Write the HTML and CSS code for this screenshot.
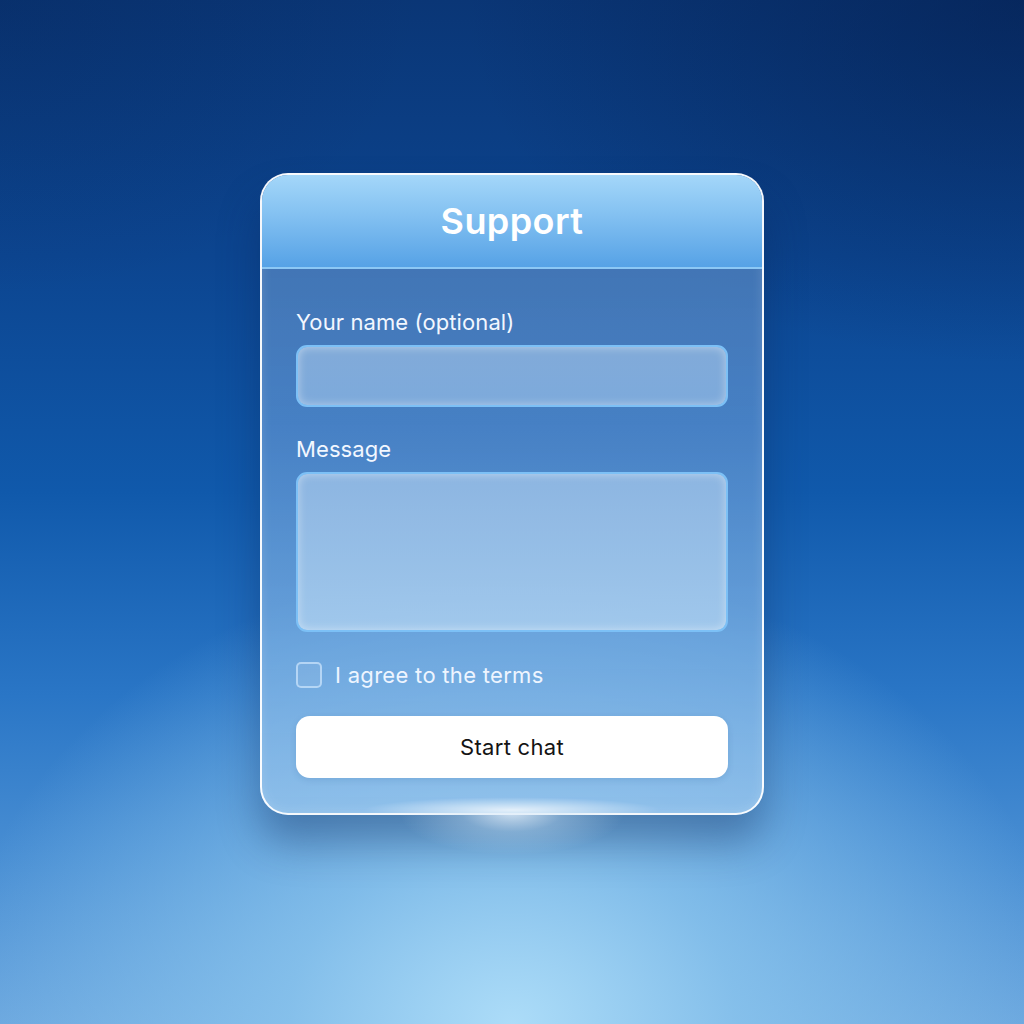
FILE: index.html
```html
<!DOCTYPE html>
<html>
<head>
<meta charset="utf-8">
<link rel="stylesheet" href="styles.css">
</head>
<body>
<div class="stage">
  <div class="card-wrap">
    <div class="card">
      <div class="card-head">
        <h1 class="title">Support</h1>
      </div>
      <div class="card-body">
        <label class="label">Your name (optional)</label>
        <div class="field field-input"></div>
        <label class="label label-gap">Message</label>
        <div class="field field-area"></div>
        <div class="check-row">
          <span class="checkbox"></span>
          <span class="check-text">I agree to the terms</span>
        </div>
        <button class="btn">Start chat</button>
      </div>
      <div class="inner-glow"></div>
    </div>
    <div class="under-glow"></div>
  </div>
</div>
</body>
</html>
```

FILE: styles.css
```css
html, body {
  margin: 0;
  padding: 0;
  width: 1024px;
  height: 1024px;
  overflow: hidden;
}
body {
  font-family: Inter, "Noto Sans", "Liberation Sans", sans-serif;
}
.stage {
  width: 1024px;
  height: 1024px;
  display: flex;
  justify-content: center;
  align-items: flex-start;
  background:
    radial-gradient(ellipse 560px 460px at 50% 100%, rgba(172,220,248,1) 0%, rgba(140,198,238,0.8) 40%, rgba(100,165,225,0) 100%),
    linear-gradient(180deg, #0a3676 0%, #0c4590 25%, #1059ab 48%, #2a76c6 68%, #4b90d4 85%, #6aa6de 100%);
  position: relative;
}
.stage::before {
  content: "";
  position: absolute;
  inset: 0;
  background: radial-gradient(ellipse 800px 520px at 100% 0%, rgba(3,25,70,0.5) 0%, rgba(3,25,70,0) 70%),
              radial-gradient(ellipse 600px 420px at 0% 0%, rgba(3,25,70,0.2) 0%, rgba(3,25,70,0) 70%);
  pointer-events: none;
}
.card-wrap {
  position: relative;
  margin-top: 173px;
  z-index: 1;
}
.card {
  position: relative;
  width: 504px;
  height: 642px;
  box-sizing: border-box;
  border: 2px solid rgba(255,255,255,0.95);
  border-radius: 28px;
  overflow: hidden;
  background: linear-gradient(180deg, rgba(70,118,178,0.9) 0%, rgba(85,140,205,0.8) 40%, rgba(125,178,228,0.78) 75%, rgba(150,196,236,0.8) 100%);
  box-shadow: 0 28px 40px rgba(10,40,90,0.38), inset 0 0 12px rgba(255,255,255,0.15);
  display: flex;
  flex-direction: column;
}
.card-head {
  height: 92px;
  flex: none;
  background: linear-gradient(180deg, #a4d7f9 0%, #82c0f1 45%, #56a2e6 100%);
  border-bottom: 2px solid #8cc8f5;
  display: flex;
  align-items: center;
  justify-content: center;
}
.title {
  margin: 0;
  color: #ffffff;
  font-size: 36px;
  font-weight: 600;
  letter-spacing: 0.4px;
}
.card-body {
  padding: 40px 34px 0 34px;
  display: flex;
  flex-direction: column;
}
.label {
  color: #f2f7ff;
  font-size: 22px;
  font-weight: 400;
  line-height: 26px;
  letter-spacing: 0.1px;
  margin-bottom: 10px;
}
.label-gap {
  margin-top: 29px;
}
.field {
  box-sizing: border-box;
  border: 2px solid #7cc0f6;
  border-radius: 11px;
  background: linear-gradient(180deg, rgba(180,210,240,0.55) 0%, rgba(170,205,240,0.55) 100%);
  box-shadow: inset 0 0 10px rgba(255,255,255,0.45);
}
.field-input {
  height: 62px;
}
.field-area {
  height: 160px;
  background: linear-gradient(180deg, rgba(180,210,240,0.62) 0%, rgba(190,220,245,0.65) 100%);
}
.check-row {
  display: flex;
  align-items: center;
  gap: 13px;
  margin-top: 30px;
}
.checkbox {
  width: 26px;
  height: 26px;
  box-sizing: border-box;
  border: 2px solid rgba(190,220,248,0.85);
  border-radius: 5px;
  background: rgba(255,255,255,0.08);
}
.check-text {
  color: #eef5ff;
  font-size: 22px;
  line-height: 26px;
  letter-spacing: 0.3px;
}
.btn {
  margin-top: 28px;
  height: 62px;
  border: none;
  border-radius: 14px;
  background: #ffffff;
  color: #141414;
  font-family: Inter, "Noto Sans", "Liberation Sans", sans-serif;
  font-size: 22px;
  font-weight: 400;
  letter-spacing: 0.3px;
  box-shadow: 0 2px 6px rgba(30,80,140,0.15);
}
.inner-glow {
  position: absolute;
  left: 100px;
  right: 100px;
  bottom: -10px;
  height: 26px;
  background: radial-gradient(ellipse at 50% 50%, rgba(255,255,255,0.75) 0%, rgba(255,255,255,0) 70%);
  pointer-events: none;
}
.under-glow {
  position: absolute;
  left: 140px;
  right: 140px;
  top: 640px;
  height: 60px;
  background: radial-gradient(ellipse 50% 70% at 50% 0%, rgba(225,238,250,0.85) 0%, rgba(200,225,245,0.35) 45%, rgba(200,225,245,0) 100%);
  pointer-events: none;
}
```
